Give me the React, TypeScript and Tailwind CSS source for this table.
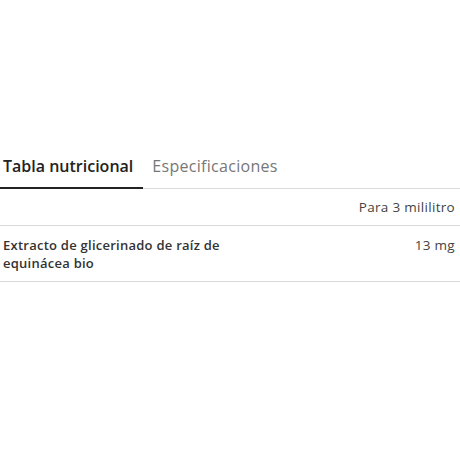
import React, { useState } from "react";

const tabs = ["Tabla nutricional", "Especificaciones"];

const rows = [{ name: "Extracto de glicerinado de raíz de equinácea bio", amount: "13 mg" }];

const App: React.FC = () => {
  const [active, setActive] = useState(0);

  return (
    <div className="w-[460px] h-[460px] bg-white pt-[155px] font-['Open_Sans',sans-serif]">
      {/* Tabs */}
      <div className="flex items-end border-b border-[#d9d9d9]">
        {tabs.map((tab, i) => (
          <button
            key={tab}
            onClick={() => setActive(i)}
            className={
              i === active
                ? "pl-[3px] pr-[10px] pb-[10px] -mb-px border-b-2 border-[#222] text-[16px] leading-[22px] font-semibold text-[#222]"
                : "pl-[9px] pb-[11px] text-[16px] leading-[22px] tracking-[0.3px] text-[#777]"
            }
          >
            {tab}
          </button>
        ))}
      </div>

      {/* Table */}
      <div className="flex justify-end border-b border-[#d9d9d9] pt-[9px] pb-[9px] pr-[5px] text-[13.5px] leading-[18px] tracking-[0.3px] text-[#444]">
        Para 3 mililitro
      </div>
      {rows.map((row) => (
        <div
          key={row.name}
          className="flex justify-between border-b border-[#d9d9d9] pt-[10px] pb-[9px] pl-[3px] pr-[5px] text-[13px] leading-[18px]"
        >
          <span className="w-[240px] font-semibold tracking-[0.25px] text-[#333]">{row.name}</span>
          <span className="text-[13.5px] text-[#444] tracking-[0.3px]">{row.amount}</span>
        </div>
      ))}
    </div>
  );
};

export default App;
